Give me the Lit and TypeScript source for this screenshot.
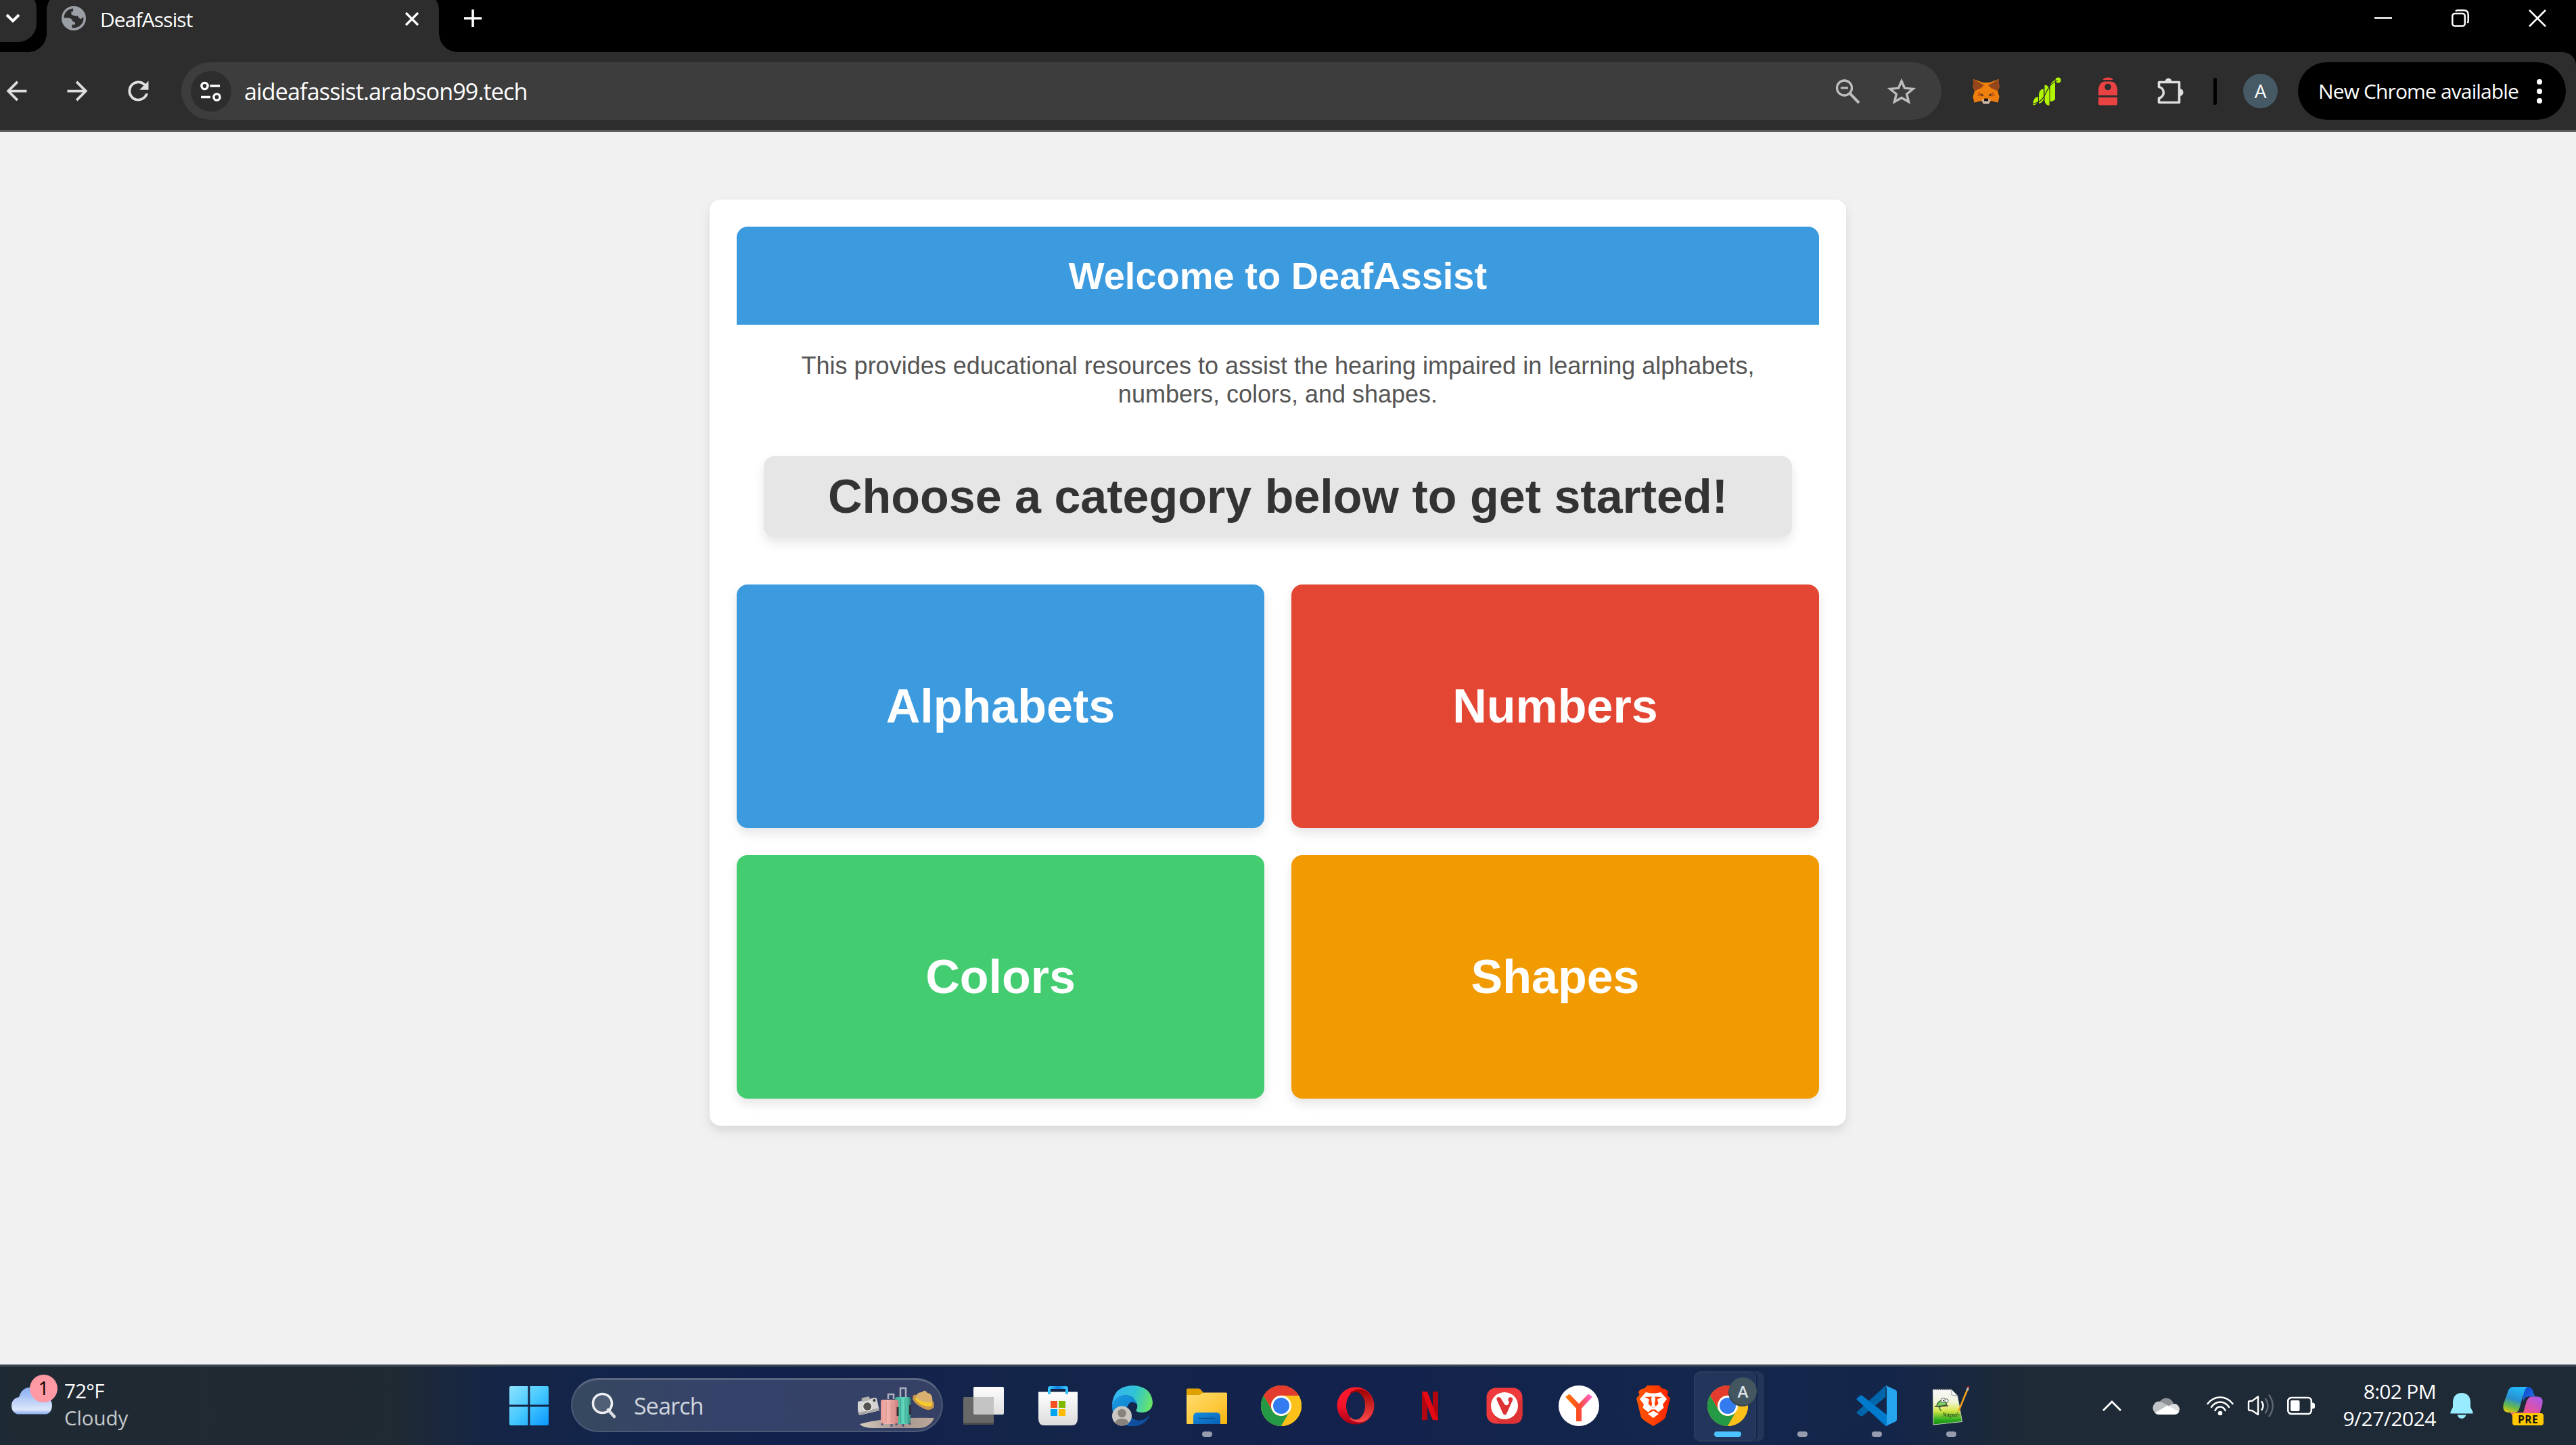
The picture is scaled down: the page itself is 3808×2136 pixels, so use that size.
import { LitElement, html, css, TemplateResult } from "lit";
import { customElement } from "lit/decorators.js";

interface TaskApp {
  name: string;
  icon: TemplateResult;
  state?: "open" | "active";
}

const globe = html`<svg width="36" height="36" viewBox="0 0 36 36">
  <circle cx="18" cy="18" r="18" fill="#9aa0a6"/>
  <path d="M17 3.5C9 4 3.500 10 3.500 17.500H10.500Q15.500 18 16 22L20 24.500V27.500H15.500V32.300Q27 33 31.500 23.500Q33 20 32.200 15.500L28.500 18.800Q25.500 17.500 25 14L18.500 14.500L14.500 12.500V8.500H17.500Z" fill="#2d2d2d"/>
  <path d="M17 3.500V8.500H14.500V12.500L18.500 14.500L25 13.500L24 18L20.500 17L14 14.500L8 16Z" fill="#2d2d2d"/>
  <path d="M17 3.500Q24 3 28.500 8Q31.500 11.500 32.300 15.500L29 19Q24.500 18 24.500 14.800L19 14.500V11.500L14.500 11.500V8H17.500Z" fill="#9aa0a6"/>
</svg>`;

const arrow = (flip: boolean) => html`<svg width="45" height="45" viewBox="0 0 24 24">
  <g transform=${flip ? "translate(24 0) scale(-1 1)" : ""}>
    <path d="M20 11H7.830l5.590-5.590L12 4l-8 8 8 8 1.410-1.410L7.830 13H20z" fill="#dedede"/>
  </g></svg>`;

const reload = html`<svg width="45" height="45" viewBox="0 0 24 24">
  <path d="M17.650 6.350A7.958 7.958 0 0 0 12 4a8 8 0 1 0 7.730 10h-2.080A6 6 0 1 1 12 6c1.660 0 3.140.690 4.220 1.780L13 11h7V4z" fill="#dedede"/></svg>`;

const tune = html`<svg width="34" height="32" viewBox="0 0 34 32" fill="none" stroke="#fff" stroke-width="3.400">
  <circle cx="7.500" cy="8" r="4.600"/><path d="M15.500 8H30M2 24.500H16"/><circle cx="25.500" cy="24.500" r="4.600"/></svg>`;

const zoomOut = html`<svg width="40" height="40" viewBox="0 0 40 40" fill="none" stroke="#bdbdbd">
  <circle cx="14.500" cy="15" r="11" stroke-width="3.300"/><path d="M22.500 23L36 37" stroke-width="4"/><path d="M9 15H20" stroke-width="3.200"/></svg>`;

const star = html`<svg width="42" height="40" viewBox="0 0 40 40" fill="none" stroke="#bdbdbd" stroke-width="3.300" preserveAspectRatio="none">
  <path d="M20 5L24.400 15.300L36.200 16.400L27.300 24.100L30 35.500L20 29.500L10 35.500L12.700 24.100L3.800 16.400L15.600 15.300Z"/></svg>`;

const fox = html`<svg width="40" height="38" viewBox="0 0 40 38">
  <path d="M1.500 1L15 6H25L38.500 1L39.500 13L37 18.500L39.500 27L37.500 35.500L27.500 32.500L24 37H16L12.500 32.500L2.500 35.500L.5 27L3 18.500L.5 13Z" fill="#f0800c"/>
  <path d="M1.500 1L17 10L12 14.500L3 18.500L.5 13ZM38.500 1L23 10L28 14.500L37 18.500L39.500 13Z" fill="#93471b"/>
  <path d="M2.500 35.500L1.500 26L12 27L13 33ZM37.500 35.500L38.500 26L28 27L27 33Z" fill="#ec7c12"/>
  <path d="M9 20L16 24L15 26.500L7 26ZM31 20L24 24L25 26.500L33 26Z" fill="#cd5c12"/>
  <path d="M12.500 22.500L17 25L13 25.500ZM27.500 22.500L23 25L27 25.500Z" fill="#20313c"/>
  <path d="M13.500 32L16 30.500H24L26.500 32L24 37.500H16Z" fill="#d0bdae"/>
  <path d="M17.500 29.500H22.500L23.500 33.500H16.500Z" fill="#121212"/></svg>`;

const greenChart = html`<svg width="42" height="42" viewBox="0 0 42 42" fill="#b1f500">
  <circle cx="37.500" cy="4.500" r="4"/>
  <path d="M25.500 14Q27 6 33 4.500V33Q30 36 25.500 36Z"/>
  <path d="M17.500 11.500Q24.500 12 24.500 20V42Q17.500 41 17.500 34Z"/>
  <path d="M9 26Q9 18 16 17.500V33Q14 38 9 39Z"/>
  <path d="M.5 40Q0 30 8 29V35Q6 41 .5 41.500Z"/>
  <path d="M1 39Q13 38 19 24Q26 8 37 5" fill="none" stroke="#2d2d2d" stroke-width="1.100"/></svg>`;

const redPack = html`<svg width="28" height="42" viewBox="0 0 28 42">
  <path d="M6.500 4Q8 .5 14 .5Q20 .5 21.500 4ZM0 27V19Q1 6.500 10 6.500H18Q27 6.500 28 19V27ZM0 30H28V39Q28 41.500 25.500 41.500H2.500Q0 41.500 0 39Z" fill="#e94243"/>
  <circle cx="14" cy="14.500" r="4.800" fill="#2d2d2d"/></svg>`;

const puzzle = html`<svg class="puzzle" width="42" height="42" viewBox="0 0 42 42">
  <path d="M4.500 7.500H34.500V37.500H4.500V31A8.400 8.400 0 0 0 4.500 14.500Z" fill="none" stroke="#dedede" stroke-width="3.600" stroke-linejoin="round"/>
  <path d="M13.500 7A5 5.500 0 0 1 23.500 7ZM35 17A5.500 5.500 0 0 1 35 28Z" fill="#dedede"/></svg>`;

const kebab = html`<svg width="10" height="38" viewBox="0 0 10 38" fill="#fff">
  <circle cx="5" cy="5" r="4"/><circle cx="5" cy="19" r="4"/><circle cx="5" cy="33" r="4"/></svg>`;

const cloud = html`<svg width="62" height="42" viewBox="0 0 62 42">
  <defs>
    <linearGradient id="cl1" x1="0" y1="0" x2="0" y2="1"><stop offset="0" stop-color="#8aaef0"/><stop offset="1" stop-color="#c9dbfb"/></linearGradient>
    <linearGradient id="cl2" x1="0" y1="0" x2="0" y2="1"><stop offset="0" stop-color="#a9c2f5"/><stop offset=".75" stop-color="#dbe7fb"/><stop offset="1" stop-color="#8aa9ea"/></linearGradient>
  </defs>
  <path d="M10 22C11 8 18 1 27 1C37 1 44 6 46 16L46 30H12Z" fill="url(#cl1)"/>
  <path d="M9 40.500C3 39 0 34 0 28C0 20 6 15 13 15C19 15 24 17 27 21C30 16 36 13 43 13C53 13 60 19 60 27C60 35 56 40.500 50 40.500Z" fill="url(#cl2)"/></svg>`;

const windowsLogo = html`<svg width="58" height="58" viewBox="0 0 58 58">
  <defs><linearGradient id="wl" x1="0" y1="0" x2="1" y2="1" gradientUnits="objectBoundingBox"><stop offset="0" stop-color="#8fe3ff"/><stop offset=".5" stop-color="#46c9ff"/><stop offset="1" stop-color="#0a96ff"/></linearGradient></defs>
  <path d="M2 0H27.500V27.500H0V2Q0 0 2 0ZM30.500 0H56Q58 0 58 2V27.500H30.500ZM0 30.500H27.500V58H2Q0 58 0 56ZM30.500 30.500H58V56Q58 58 56 58H30.500Z" fill="url(#wl)"/></svg>`;

const searchGlass = html`<svg width="38" height="40" viewBox="0 0 38 40">
  <path d="M25 26L34 36" stroke="#dadde4" stroke-width="4.600" stroke-linecap="round"/>
  <circle cx="16.500" cy="16.500" r="14" fill="#ffffff22" stroke="#eceef2" stroke-width="3.600"/></svg>`;

const travel = html`<svg width="124" height="80" viewBox="0 0 124 80">
  <defs>
    <linearGradient id="tg" x1="0" y1="0" x2="1" y2="0"><stop offset="0" stop-color="#d9cdbf"/><stop offset=".5" stop-color="#a59490"/><stop offset="1" stop-color="#bba798"/></linearGradient>
    <linearGradient id="tp" x1="0" y1="0" x2="1" y2="0"><stop offset="0" stop-color="#e79c98"/><stop offset=".4" stop-color="#f3b4af"/><stop offset="1" stop-color="#cf7f7c"/></linearGradient>
    <linearGradient id="tt" x1="0" y1="0" x2="1" y2="0"><stop offset="0" stop-color="#3aa790"/><stop offset=".6" stop-color="#66dcc2"/><stop offset="1" stop-color="#2f8f7b"/></linearGradient>
  </defs>
  <path d="M3 67Q40 56 113 58Q106 73 90 73H26Q8 73 3 67Z" fill="url(#tg)"/>
  <g transform="rotate(-13 14 40)"><rect x="-1" y="31" width="31" height="20" rx="3" fill="#d6d4d2"/><rect x="8" y="27" width="12" height="6" rx="2" fill="#b5b3b1"/><rect x="-1" y="47" width="31" height="4" fill="#a9a7a5"/><circle cx="14" cy="41" r="7.500" fill="#efefee"/><circle cx="14" cy="41" r="6" fill="#55524f"/><circle cx="26" cy="34.500" r="2" fill="#333"/></g>
  <path d="M63 27V14H71V27M45 30V23H53V30" fill="none" stroke="#a9adc0" stroke-width="2.600"/>
  <rect x="55" y="27" width="23" height="40" rx="3" fill="url(#tt)"/><path d="M63 29V65M70 29V65" stroke="#2f9983" stroke-width="1"/>
  <rect x="76" y="39" width="3" height="14" fill="#2b2f38"/>
  <rect x="34" y="31" width="26" height="36" rx="3" fill="url(#tp)"/><path d="M42 34V64M50 34V64" stroke="#d28a87" stroke-width="1"/>
  <rect x="57.500" y="42" width="3" height="13" fill="#3b2c33"/>
  <path d="M36 66v3M50 67v4M57 66v3M67 67v4M77 65v3" stroke="#555a7c" stroke-width="3"/>
  <path d="M81 30Q81 22 87 24L111 33Q114 38 112 43Q107 48 99 45Q84 38 81 30Z" fill="#c9974f"/>
  <path d="M86 30Q86 19 95 20Q99 15 103 21Q112 22 110 37Q98 42 86 30Z" fill="#d9b070"/>
  <path d="M86 27Q95 37 110 35L109 41Q94 42 85 31Z" fill="#f6cc2c"/>
</svg>`;

const taskView = html`<svg width="60" height="58" viewBox="0 0 60 58">
  <defs><linearGradient id="tv" x1="0" y1="0" x2="0" y2="1"><stop offset="0" stop-color="#fdfdfd"/><stop offset="1" stop-color="#e0e0e0"/></linearGradient></defs>
  <rect x="15" y="1" width="45" height="41" rx="2" fill="url(#tv)"/>
  <rect x="0" y="16" width="45" height="41" rx="2" fill="#686868"/>
  <path d="M15 16H43Q45 16 45 18V42H17Q15 42 15 40Z" fill="#c4c4c4"/>
  <path d="M0 54H45V55Q45 57 43 57H2Q0 57 0 55Z" fill="#4c4c4c"/></svg>`;

const store = html`<svg width="60" height="60" viewBox="0 0 60 60">
  <defs>
    <linearGradient id="st" x1="0" y1="0" x2="0" y2="1"><stop offset="0" stop-color="#fff"/><stop offset="1" stop-color="#dcdcdc"/></linearGradient>
    <linearGradient id="sh" x1="0" y1="0" x2="1" y2="0"><stop offset="0" stop-color="#35c6ff"/><stop offset=".5" stop-color="#0f7fe0"/><stop offset="1" stop-color="#35c6ff"/></linearGradient>
  </defs>
  <path d="M1 9.500H59V49Q59 59 50 59H10Q1 59 1 49Z" fill="url(#st)"/>
  <path d="M17 13V4.500Q17 3 18.500 3H41.500Q43 3 43 4.500V13" fill="none" stroke="url(#sh)" stroke-width="4"/>
  <path fill="#f25022" d="M19 23h10v10H19z"/><path fill="#7fba00" d="M31 23h10v10H31z"/><path fill="#00a4ef" d="M19 35h10v10H19z"/><path fill="#ffb900" d="M31 35h10v10H31z"/></svg>`;

const edge = html`<svg width="60" height="60" viewBox="0 0 60 60">
  <defs>
    <linearGradient id="e1" x1="0" y1=".2" x2="1" y2=".4"><stop offset="0" stop-color="#35b3f4"/><stop offset=".55" stop-color="#2fc3d6"/><stop offset="1" stop-color="#66e46b"/></linearGradient>
    <linearGradient id="e2" x1="0" y1="0" x2="1" y2="1"><stop offset="0" stop-color="#1b9de2"/><stop offset="1" stop-color="#0566bf"/></linearGradient>
  </defs>
  <path d="M0 30Q0 14 18 14Q34 15 37 28Q28 20 23 30Q18 45 34 51Q46 55 55 44Q48 60 30 60Q0 58 0 30Z" fill="url(#e2)"/>
  <path d="M23 30Q17 46 32 51Q45 55 55.500 44.500Q48 60 30 60Q14 54 14 40Z" fill="#104f9f"/>
  <path d="M0 28Q2 1 30 0Q58 1 60 25Q59 40 43 40Q34 39 35.500 36Q39 32 36 25Q31 14 18 14Q6 15 0 28Z" fill="url(#e1)"/>
  <circle cx="14.500" cy="45" r="14.500" fill="#c9c6c2"/><circle cx="14.500" cy="41" r="6.300" fill="#87827c"/><path d="M4.500 55Q6 49 14.500 49Q23 49 24.500 55Q20 59.500 14.500 59.500Q9 59.500 4.500 55Z" fill="#87827c"/></svg>`;

const folder = html`<svg width="60" height="60" viewBox="0 0 60 60">
  <defs>
    <linearGradient id="f1" x1="0" y1="0" x2="1" y2="1"><stop offset="0" stop-color="#ffdc70"/><stop offset=".6" stop-color="#fdc83a"/><stop offset="1" stop-color="#f5b50c"/></linearGradient>
    <linearGradient id="f2" x1="0" y1="0" x2="1" y2="1"><stop offset="0" stop-color="#1490df"/><stop offset="1" stop-color="#0a5eb4"/></linearGradient>
  </defs>
  <path d="M0 6Q0 4.500 1.500 4.500H18Q20 4.500 21.500 6.500L25 11V20H0Z" fill="#dfa100"/>
  <path d="M0 14H18Q20 14 22 12Q23.500 10.500 26 10.500H58.500Q60 10.500 60 12V55.500Q60 57 58.500 57H1.500Q0 57 0 55.500Z" fill="url(#f1)"/>
  <path d="M10 57V46Q10 40 16 40H44Q50 40 50 46V57Z" fill="url(#f2)"/><path d="M18 48.500H42" stroke="#0b4a8b" stroke-width="1.500"/></svg>`;

const chromeShapes = html`<svg width="60" height="60" viewBox="0 0 60 60">
  <circle cx="30" cy="30" r="30" fill="#fbc11a"/>
  <path d="M4 15A30 30 0 0 1 56 15H30A15 15 0 0 0 17 37.500Z" fill="#e33b2e"/>
  <path d="M4 15A30 30 0 0 0 30 60L43 37.500H43A15 15 0 0 1 17 37.500Z" fill="#249a46"/>
  <path d="M30 60L43 37.500A15 15 0 0 0 43 22.500L38 15H56A30 30 0 0 1 30 60Z" fill="#fbc11a"/>
  <circle cx="30" cy="30" r="15" fill="#fff"/><circle cx="30" cy="30" r="12" fill="#327cf0"/></svg>`;

const opera = html`<svg width="60" height="60" viewBox="0 0 60 60">
  <defs>
    <linearGradient id="o1" x1="0" y1="0" x2="0" y2="1"><stop offset="0" stop-color="#ff1b2d"/><stop offset=".5" stop-color="#f5142a"/><stop offset="1" stop-color="#a50014"/></linearGradient>
    <linearGradient id="o2" x1="0" y1="0" x2="0" y2="1"><stop offset="0" stop-color="#9c0000"/><stop offset="1" stop-color="#ff4b4b"/></linearGradient>
  </defs>
  <circle cx="30" cy="30" r="27.500" fill="url(#o1)"/>
  <path d="M22 10Q36 1 48 10Q57 18 57 30Q57 42 48 50Q36 59 22 50Z" fill="url(#o2)"/>
  <ellipse cx="30" cy="30" rx="14" ry="20.500" fill="#14244e"/></svg>`;

const netflix = html`<svg width="60" height="60" viewBox="0 0 60 60">
  <path d="M18 9H26V51L18 51.500ZM34 9H42V51.500L34 51Z" fill="#b1060f"/><path d="M18 9H26L42 51.500L33.500 50.500Z" fill="#e50914"/></svg>`;

const vivaldi = html`<svg width="60" height="60" viewBox="0 0 60 60">
  <rect x="3.500" y="3.500" width="53" height="53" rx="14" fill="#ee3a3c"/><path d="M14 46L24 56.500H44Q56 56 56.500 44V20Z" fill="#dc3233"/><circle cx="30" cy="30" r="20" fill="#fff"/>
  <path d="M19 22Q17 18 21 17Q24 17 26 21L30.500 28.500Q35 31 37 25Q33 19 38.500 17Q44 18 41.500 23L33.500 41Q30.500 46 27.500 41Z" fill="#dd3337"/></svg>`;

const yandex = html`<svg width="60" height="60" viewBox="0 0 60 60">
  <defs><linearGradient id="y1" x1="0" y1="0" x2="1" y2="0"><stop offset="0" stop-color="#ff7a00"/><stop offset=".5" stop-color="#fb4a25"/><stop offset="1" stop-color="#ff63e0"/></linearGradient></defs>
  <circle cx="30" cy="30" r="30" fill="#fff"/>
  <path d="M10 17L16 12.500L30 27L44 12.500L50 17L34 34V53H26V34Z" fill="url(#y1)"/></svg>`;

const brave = html`<svg width="60" height="60" viewBox="0 0 60 60">
  <defs><linearGradient id="b1" x1="0" y1="0" x2="1" y2="0"><stop offset="0" stop-color="#ff5601"/><stop offset=".5" stop-color="#ff4102"/><stop offset="1" stop-color="#ff2000"/></linearGradient></defs>
  <path d="M21 0H39L43 4.500Q48 4 52 9.500L50.500 14L55 19L48 47Q46 51 30 60Q14 51 12 47L5 19L9.500 14L8 9.500Q12 4 17 4.500Z" fill="url(#b1)"/>
  <path d="M19 10L26 11.500H34L41 10L50 20L44 28L45.500 33L37.500 39.500L33 35.500H27L22.500 39.500L14.500 33L16 28L10 20Z" fill="#fff"/>
  <path d="M17 17L28 16.500L27 20L29 28.500L31 28.500L33 20L32 16.500L43 17L36 20.500L37.500 27L33 31.500L30 33.200L27 31.500L22.500 27L24 20.500Z" fill="#ff4102"/>
  <path d="M28.500 16H31.500L33 20L31.800 28L33.500 31L30 33L26.500 31L28.200 28L27 20Z" fill="#fff"/>
  <path d="M30 37.500L38 42L30 48L22 42Z" fill="#fff"/></svg>`;

const chromeProfile = html`<span class="stack">${chromeShapes}<span class="profile">A</span></span>`;

const vscode = html`<svg width="60" height="60" viewBox="0 0 60 60">
  <path d="M1 39L43.500 0V17L9.500 45Q7 46 5.500 44.500L1 41Q-.5 40 1 39Z" fill="#0065a9"/>
  <path d="M1 21Q-.5 20 1 19L5.500 15Q7 14 9.500 15.500L46 44V60H43.500Z" fill="#007acc"/>
  <path d="M43.500 0L58 6.500Q60 7.500 60 9.500V50.500Q60 52.500 58 53.500L43.500 60Q45 58 45 55V5Q45 2 43.500 0Z" fill="#24a5ee"/></svg>`;

const notepad = html`<svg width="60" height="60" viewBox="0 0 60 60">
  <defs><linearGradient id="n1" x1="0" y1="0" x2="0" y2="1"><stop offset="0" stop-color="#f5f7fa"/><stop offset=".35" stop-color="#f1f5dc"/><stop offset=".6" stop-color="#d9e84a"/><stop offset=".85" stop-color="#35b022"/><stop offset="1" stop-color="#0f8a10"/></linearGradient></defs>
  <path d="M3.500 6H31L39.500 15L46.500 53.500L4 58Z" fill="url(#n1)" stroke="#c9d6c0" stroke-width="1"/>
  <path d="M31 6V14L39.500 15Z" fill="#fff" stroke="#777" stroke-width=".8"/>
  <path d="M5 5.500H30" stroke="#40454e" stroke-width="2" stroke-dasharray="1.500 1.500"/>
  <path d="M9 31Q10 22 19 22Q25 24 23 29L14 31Q12 36 16 37" fill="#7ccf63" stroke="#3b6b33" stroke-width="1.500"/>
  <path d="M6 31L26 30" stroke="#4a2c20" stroke-width="1.300"/>
  <circle cx="18.500" cy="22" r="3.300" fill="#fff" stroke="#333" stroke-width=".8"/><circle cx="23.500" cy="22.500" r="2.600" fill="#fff" stroke="#333" stroke-width=".8"/><circle cx="19" cy="22.500" r="1" fill="#111"/>
  <text x="17" y="45.500" class="tiny">Notepad++</text>
  <path d="M54.500 2L57 3L43 37L40.500 39L41 35Z" fill="#f0a21a"/><path d="M54.500 2L57 3L55.500 8L52.500 7Z" fill="#b8b8c0"/><path d="M55 .8L57.500 2L56.600 4.500L54 3.500Z" fill="#c5332b"/></svg>`;

const chevronUp = html`<svg width="30" height="18" viewBox="0 0 30 18"><path d="M2 16L15 3L28 16" fill="none" stroke="#fff" stroke-width="2.800"/></svg>`;

const onedrive = html`<svg width="40" height="28" viewBox="0 0 40 28">
  <path d="M10 9A11 10 0 0 1 31 11L22 16Z" fill="#8c9196"/><path d="M4 25Q-2 18 2 12Q7 5 14 9L25 14.500Z" fill="#bfc3c6"/><path d="M20 16L29 11.500Q37 9 40 18Q40 24 36 26Z" fill="#dcdee0"/>
  <path d="M3.500 24.500L22 13.500L39 23Q37 27 32 27H9Q5.500 27 3.500 24.500Z" fill="#fff"/></svg>`;

const wifi = html`<svg width="40" height="30" viewBox="0 0 40 30" fill="none" stroke="#fff" stroke-width="2.500" stroke-linecap="round">
  <path d="M1.500 12Q9 2.500 20 2.500Q31 2.500 38.500 12M7 17Q12 9.500 20 9.500Q28 9.500 33 17M12.500 22Q15 16.500 20 16.500Q25 16.500 27.500 22"/><circle cx="20" cy="26" r="2" fill="#fff"/></svg>`;

const speaker = html`<svg width="40" height="36" viewBox="0 0 40 36" fill="none" stroke="#fff" stroke-width="2.400" stroke-linecap="round">
  <path d="M2 13Q2 11 4 11H7L16 4.500V31L7 25H4Q2 25 2 23Z" stroke-linejoin="round"/><path d="M21.500 12Q25.500 18 21.500 24"/><path d="M27 7.500Q34 18 27 28.500M32.500 2.500Q43 18 32.500 33.500" stroke="#5f6870"/></svg>`;

const battery = html`<svg width="42" height="28" viewBox="0 0 42 28">
  <rect x="1.300" y="2" width="34.500" height="24" rx="5" fill="none" stroke="#fff" stroke-width="2.600"/><rect x="5" y="6" width="13.500" height="16" rx="2" fill="#fff"/><path d="M37 9.500H38Q41 10 41 12.500V15.500Q41 18 38 18.500H37Z" fill="#fff"/></svg>`;

const bell = html`<svg width="40" height="40" viewBox="0 0 40 40" fill="#99ebff">
  <path d="M20 1Q32 1.500 33 14V22L36.500 29V31.500H3.500V29L7 22V14Q8 1.500 20 1ZM13.500 33.500H26.500Q25 38.500 20 39Q15 38.500 13.500 33.500Z"/></svg>`;

const copilot = html`<svg width="60" height="58" viewBox="0 0 60 58">
  <defs>
    <linearGradient id="c1" x1=".3" y1="0" x2="0" y2="1"><stop offset="0" stop-color="#22b4f5"/><stop offset=".4" stop-color="#2a8fd0"/><stop offset=".7" stop-color="#67b84a"/><stop offset="1" stop-color="#ffcc08"/></linearGradient>
    <linearGradient id="c2" x1="1" y1="0" x2="0" y2="1"><stop offset="0" stop-color="#a85af2"/><stop offset=".5" stop-color="#e2519f"/><stop offset="1" stop-color="#ff7a4a"/></linearGradient>
    <linearGradient id="c3" x1="0" y1="0" x2="1" y2="1"><stop offset="0" stop-color="#0a45c9"/><stop offset="1" stop-color="#2d7bf0"/></linearGradient>
  </defs>
  <path d="M30 1H37Q43 1 45 9Q46 15 50 15.500H38Q32 15.500 30 23Z" fill="url(#c3)"/>
  <path d="M16 1H37Q33 2 31 10L24 34Q22 39 17 39H8Q-2 38 1 26L7 9Q9 1 16 1Z" fill="url(#c1)"/>
  <path d="M42 15.500H51Q61 16 58 28L52 48H16Q13 42 11 39H20Q28 39 31 31L35 20Q37 15.500 42 15.500Z" fill="url(#c2)"/>
  <path d="M30 24Q32 15.500 38 15.500H42Q38 16 35 22L30 39H23Q25 38 26 34Z" fill="#1e2a36"/>
  <rect x="14" y="40" width="46" height="18" rx="4" fill="#ffc800"/><text x="37" y="54.500" text-anchor="middle" class="pre">PRE</text></svg>`;

@customElement("app-root")
export class AppRoot extends LitElement {
  static styles = css`
    :host { display: flex; flex-direction: column; width: 3808px; height: 2136px; overflow: hidden; font-family: "Open Sans", "Noto Sans", sans-serif; background: #000; color: #fff; }
    * { box-sizing: border-box; }
    svg { display: block; flex: none; }
    .tabs { height: 77px; flex: none; display: flex; align-items: flex-start; background: #000; overflow: hidden; }
    .tablist { width: 54px; height: 74px; margin-top: -12px; padding: 30px 0 0 7px; background: #2d2d2d; border-radius: 0 24px 27px 0; }
    .tab { position: relative; width: 580px; height: 89px; margin: -12px 0 0 15px; padding: 21px 29px 0 22px; display: flex; align-items: flex-start; background: #2d2d2d; border-radius: 27px 27px 0 0; }
    .tab::before, .tab::after { content: ""; position: absolute; bottom: 0; width: 27px; height: 27px; }
    .tab::before { left: -27px; background: radial-gradient(circle at 0 0, transparent 26.500px, #2d2d2d 27px); }
    .tab::after { right: -27px; background: radial-gradient(circle at 100% 0, transparent 26.500px, #2d2d2d 27px); }
    .title { margin-left: 21px; flex: 1; font-size: 30px; line-height: 36px; letter-spacing: -.9px; padding-top: 2px; }
    .x { margin-top: 8px; }
    .plus { margin: 14px 0 0 37px; }
    .win { margin-left: auto; margin-right: 44px; padding-top: 14px; display: flex; gap: 88px; }
    .bar { height: 118px; flex: none; display: flex; align-items: center; background: #2d2d2d; border-bottom: 3px solid #5f5c5c; border-top-right-radius: 20px; }
    .nav { width: 48px; display: flex; justify-content: center; }
    .nav.wide { width: 132px; }
    .omni { width: 2602px; height: 85px; margin-left: 40px; padding: 0 38px 0 14px; display: flex; align-items: center; gap: 38px; background: #3d3d3d; border-radius: 43px; }
    .site { width: 60px; height: 60px; display: flex; align-items: center; justify-content: center; background: #2d2d2d; border-radius: 50%; }
    .url { flex: 1; margin-left: -19px; font-size: 34px; line-height: 46px; letter-spacing: -.83px; }
    .exts { display: flex; align-items: center; gap: 30px; margin-left: 36px; }
    .ext { width: 60px; display: flex; justify-content: center; }
    .puzzle { margin-left: 4px; }
    .rule { width: 5px; height: 40px; margin-left: 36px; background: #000; border-radius: 2px; }
    .avatar { width: 51px; height: 51px; margin-left: 39px; border-radius: 50%; background: #455a64; text-align: center; font: 28px/50px "Open Sans", sans-serif; }
    .update { width: 396px; height: 85px; margin-left: 30px; padding: 0 34px 0 30px; display: flex; align-items: center; justify-content: space-between; background: #000; border-radius: 43px; font-size: 30px; letter-spacing: -.87px; white-space: nowrap; }
    .page { flex: 1; padding: 100px 30px 0 0; background: #f1f1f1; font-family: "Liberation Sans", Arial, sans-serif; }
    .card { width: 1680px; height: 1369px; margin: 0 auto; padding: 40px; background: #fff; border-radius: 16px; box-shadow: 0 8px 16px rgba(0,0,0,.1); text-align: center; }
    .hero { height: 145px; padding-top: 41px; background: #3c9adf; border-radius: 16px 16px 0 0; font-size: 56px; line-height: 64px; font-weight: 700; }
    .intro { margin: 40px 80px 70px; font-size: 36px; line-height: 42px; color: #555; }
    .choose { height: 120px; margin: 0 40px 70px; padding: 20px; background: #e6e6e6; border-radius: 16px; box-shadow: 0 8px 16px rgba(0,0,0,.1); color: #333; font-size: 70px; line-height: 80px; font-weight: 700; }
    .grid { display: grid; grid-template-columns: 1fr 1fr; grid-auto-rows: 360px; gap: 40px; }
    .cat { display: flex; align-items: center; justify-content: center; border-radius: 16px; box-shadow: 0 8px 16px rgba(0,0,0,.1); font-size: 70px; line-height: 80px; font-weight: 700; }
    .blue { background: #3c9adf; } .red { background: #e34734; } .green { background: #44cc71; } .orange { background: #f19a02; }
    .task { height: 119px; flex: none; display: flex; align-items: center; border-top: 3px solid #3f4654; background: linear-gradient(90deg, #1e2a33 0, #212933 300px, #202a33 580px, #152546 720px, #12244a 900px, #12204c 1250px, #14254a 1500px, #12224c 2000px, #14264c 2500px, #14254a 2800px, #1e2a36 2990px, #1e2a36 100%); }
    .weather { width: 727px; height: 116px; padding: 9px 0 0 17px; display: flex; align-items: flex-start; }
    .sky { position: relative; width: 78px; height: 80px; padding-top: 21px; }
    .count { position: absolute; left: 27px; top: 3px; width: 41px; height: 41px; border-radius: 50%; background: #ff99a4; color: #000; font-size: 27px; line-height: 40px; text-align: center; }
    .lines { font-size: 29.500px; line-height: 40px; padding-top: 7px; }
    .lines .temp { letter-spacing: -.7px; }
    .lines .cond { color: #c6c9cb; letter-spacing: -.1px; }
    .cell { position: relative; width: 110px; height: 116px; display: flex; align-items: center; justify-content: center; }
    .search { width: 550px; height: 80px; margin: -2px 5px 0 7px; padding: 0 0 0 28px; display: flex; align-items: center; background: linear-gradient(90deg, #36485f, #35426a 40%, #354064); border: 2px solid #4b5a76; border-top: 3px solid #5b6780; border-radius: 40px; overflow: hidden; }
    .search span { flex: 1; margin-left: 25px; font-size: 34px; letter-spacing: -.8px; color: #d0d5de; }
    .cell.open::after { content: ""; position: absolute; left: 48px; top: 96px; width: 15px; height: 8px; border-radius: 4px; background: #969cae; }
    .cell.active::after { content: ""; position: absolute; left: 35px; top: 96px; width: 40px; height: 8px; border-radius: 4px; background: #4cc2ff; }
    .cell.active::before { content: ""; position: absolute; left: 5px; top: 7px; width: 88px; height: 100px; border-radius: 10px; background: #22355a; border: 2px solid #2b3c60; box-shadow: 2px 0 0 #13254a, 12px 0 0 #23365a; }
    .stack { position: relative; display: block; }
    .profile { position: absolute; left: 32px; top: -12px; width: 41px; height: 41px; border-radius: 50%; background: #44565f; color: #dde2e5; text-align: center; font: 600 24px/41px "Open Sans", sans-serif; box-shadow: -1px 2px 0 #34444d; }
    .tiny { font: italic 9px "Liberation Serif", serif; fill: #2d4a1c; letter-spacing: -1.300px; }
    .pre { font: 700 15.500px "Open Sans", sans-serif; fill: #111; letter-spacing: .5px; }
    .tray { display: flex; align-items: center; margin-left: 143px; height: 116px; }
    .slot { width: 80px; display: flex; justify-content: center; }
    .slot.tight { width: 40px; }
    .slot.gap { margin-left: 20px; }
    .clock { width: 162px; margin: 0 -2px 0 17px; text-align: right; font-size: 30px; line-height: 40px; padding-bottom: 3px; }
    .clock .time { letter-spacing: -.7px; }
    .clock .date { letter-spacing: -.5px; }
    .slot.far { width: 60px; margin-left: 41px; }
  `;

  private categories = [
    { label: "Alphabets", tone: "blue" },
    { label: "Numbers", tone: "red" },
    { label: "Colors", tone: "green" },
    { label: "Shapes", tone: "orange" },
  ];

  private apps: TaskApp[] = [
    { name: "taskview", icon: taskView },
    { name: "store", icon: store },
    { name: "edge", icon: edge },
    { name: "files", icon: folder, state: "open" },
    { name: "chrome", icon: chromeShapes },
    { name: "opera", icon: opera },
    { name: "netflix", icon: netflix },
    { name: "vivaldi", icon: vivaldi },
    { name: "yandex", icon: yandex },
    { name: "brave", icon: brave },
    { name: "chrome-profile", icon: chromeProfile, state: "active" },
    { name: "blank", icon: html``, state: "open" },
    { name: "vscode", icon: vscode, state: "open" },
    { name: "notepad", icon: notepad, state: "open" },
  ];

  render() {
    return html`
      <div class="tabs">
        <div class="tablist"><svg width="24" height="18" viewBox="0 0 24 18"><path d="M3 4L12 13L21 4" fill="none" stroke="#fff" stroke-width="4"/></svg></div>
        <div class="tab">
          ${globe}<span class="title">DeafAssist</span>
          <svg class="x" width="22" height="22" viewBox="0 0 22 22"><path d="M2 2L20 20M20 2L2 20" stroke="#fff" stroke-width="3.300"/></svg>
        </div>
        <svg class="plus" width="26" height="26" viewBox="0 0 26 26"><path d="M13 0V26M0 13H26" stroke="#fff" stroke-width="3.600"/></svg>
        <div class="win">
          <svg width="26" height="26" viewBox="0 0 26 26"><path d="M0 12.500H26" stroke="#fff" stroke-width="2.600"/></svg>
          <svg width="26" height="26" viewBox="0 0 26 26" fill="none" stroke="#fff" stroke-width="2.500"><rect x="1.300" y="6" width="18.500" height="18.500" rx="3.500"/><path d="M6 2.500Q7.500 1.300 9.500 1.300H18Q24.700 1.300 24.700 8V16.500Q24.700 18.500 23.500 20"/></svg>
          <svg width="26" height="26" viewBox="0 0 26 26"><path d="M1 1L25 25M25 1L1 25" stroke="#fff" stroke-width="2.500"/></svg>
        </div>
      </div>
      <div class="bar">
        <span class="nav">${arrow(false)}</span>
        <span class="nav wide">${arrow(true)}</span>
        <span class="nav">${reload}</span>
        <div class="omni"><span class="site">${tune}</span><span class="url">aideafassist.arabson99.tech</span>${zoomOut}${star}</div>
        <div class="exts">${[fox, greenChart, redPack, puzzle].map((i) => html`<span class="ext">${i}</span>`)}</div>
        <span class="rule"></span>
        <span class="avatar">A</span>
        <div class="update"><span>New Chrome available</span>${kebab}</div>
      </div>
      <main class="page">
        <section class="card">
          <div class="hero">Welcome to DeafAssist</div>
          <div class="intro">This provides educational resources to assist the hearing impaired in learning alphabets, numbers, colors, and shapes.</div>
          <div class="choose">Choose a category below to get started!</div>
          <div class="grid">${this.categories.map((c) => html`<div class="cat ${c.tone}">${c.label}</div>`)}</div>
        </section>
      </main>
      <footer class="task">
        <div class="weather">
          <div class="sky">${cloud}<span class="count">1</span></div>
          <div class="lines"><div class="temp">72°F</div><div class="cond">Cloudy</div></div>
        </div>
        <div class="cell">${windowsLogo}</div>
        <div class="search">${searchGlass}<span>Search</span>${travel}</div>
        ${this.apps.map((a) => html`<div class="cell ${a.state ?? ""}">${a.icon}</div>`)}
        <div class="tray">
          <span class="slot">${chevronUp}</span>
          <span class="slot">${onedrive}</span>
          <span class="slot">${wifi}</span>
          <span class="slot tight">${speaker}</span>
          <span class="slot tight gap">${battery}</span>
          <div class="clock"><div class="time">8:02 PM</div><div class="date">9/27/2024</div></div>
          <span class="slot tight gap">${bell}</span>
          <span class="slot far">${copilot}</span>
        </div>
      </footer>
    `;
  }
}
